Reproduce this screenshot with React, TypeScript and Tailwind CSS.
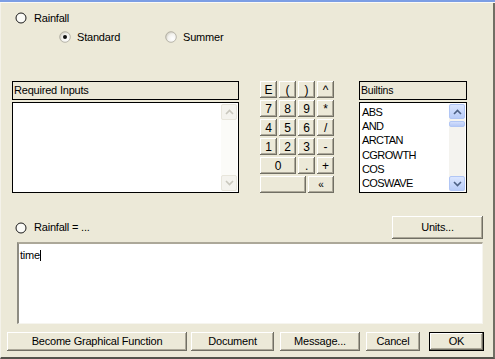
import React from "react";

const bevel =
  "bg-[#ece9d8] shadow-[inset_-1px_-1px_0_#716f64,inset_1px_1px_0_#ffffff,inset_-2px_-2px_0_#aca899] flex items-center justify-center text-black";

function Radio({ checked, plain }: { checked?: boolean; plain?: boolean }) {
  if (plain) {
    return (
      <svg width="12" height="12" viewBox="0 0 12 12" className="shrink-0">
        <circle cx="6" cy="6" r="5" fill="#fbfbf7" stroke="#1a1a1a" strokeWidth="1" />
      </svg>
    );
  }
  return (
    <svg width="12" height="12" viewBox="0 0 12 12" className="shrink-0">
      <defs>
        <radialGradient id="rg" cx="0.65" cy="0.65" r="0.7">
          <stop offset="0" stopColor="#ffffff" />
          <stop offset="0.6" stopColor="#f3f2ee" />
          <stop offset="1" stopColor="#cfccc0" />
        </radialGradient>
      </defs>
      <circle cx="6" cy="6" r="5.3" fill="url(#rg)" stroke="#a8a69a" strokeWidth="0.8" />
      {checked && <circle cx="6" cy="6" r="2" fill="#111" />}
    </svg>
  );
}

function Chevron({ up, color }: { up?: boolean; color: string }) {
  return (
    <svg width="9" height="6" viewBox="0 0 9 6">
      <path
        d={up ? "M1 5 L4.5 1.5 L8 5" : "M1 1 L4.5 4.5 L8 1"}
        fill="none"
        stroke={color}
        strokeWidth="1.6"
      />
    </svg>
  );
}

export default function App() {
  const calcRows = [
    ["E", "(", ")", "^"],
    ["7", "8", "9", "*"],
    ["4", "5", "6", "/"],
    ["1", "2", "3", "-"],
  ];
  const builtins = ["ABS", "AND", "ARCTAN", "CGROWTH", "COS", "COSWAVE"];
  return (
    <div className="w-[495px] h-[359px] bg-[#ece9d8] flex flex-col overflow-hidden font-['Liberation_Sans',Arial,sans-serif] text-[11px] leading-none text-black tracking-[-0.2px]">
      <div className="h-[2px] bg-[#7c9ee4] shrink-0" />
      <div className="h-px bg-[#fbfaf6] shrink-0" />
      <div className="flex-1 flex flex-col border-r-2 border-b-2 border-r-[#716f64] border-b-[#55534c] border-l border-l-[#f4f2ea]">
        {/* Row 1 */}
        <div className="mt-[9px] h-[12px] flex items-center pl-[14px]">
          <Radio plain />
          <span className="ml-[7px]">Rainfall</span>
        </div>
        {/* Row 2 */}
        <div className="mt-[7px] h-[12px] flex items-center">
          <div className="ml-[58px] flex items-center">
            <Radio checked />
            <span className="ml-[6px]">Standard</span>
          </div>
          <div className="ml-[45px] flex items-center">
            <Radio />
            <span className="ml-[6px]">Summer</span>
          </div>
        </div>
        {/* Middle section */}
        <div className="mt-[38px] flex items-start">
          <div className="ml-[11px] w-[227px] flex flex-col">
            <div className="h-[19px] border border-black flex items-center pl-[1px]">Required Inputs</div>
            <div className="mt-[2px] h-[91px] border border-black bg-white flex justify-end p-[1px]">
              <div className="w-[16px] h-full bg-[#fbfbf8] flex flex-col justify-between">
                <div className="h-[16px] bg-[#f4f3ee] border border-[#e8e6dc] rounded-[2px] flex items-center justify-center">
                  <Chevron up color="#c9c7bd" />
                </div>
                <div className="h-[16px] bg-[#f4f3ee] border border-[#e8e6dc] rounded-[2px] flex items-center justify-center">
                  <Chevron color="#c9c7bd" />
                </div>
              </div>
            </div>
          </div>
          <div className="ml-[21px] w-[74px] flex flex-col gap-[2px]">
            {calcRows.map((row, i) => (
              <div key={i} className="flex gap-[2px]">
                {row.map((k) => (
                  <div key={k} className={`w-[17px] h-[17px] text-[12px] ${bevel}`}>
                    {k}
                  </div>
                ))}
              </div>
            ))}
            <div className="flex gap-[2px]">
              <div className={`w-[36px] h-[17px] text-[12px] ${bevel}`}>0</div>
              <div className={`w-[17px] h-[17px] text-[12px] ${bevel}`}>.</div>
              <div className={`w-[17px] h-[17px] text-[12px] ${bevel}`}>+</div>
            </div>
            <div className="flex gap-[2px]">
              <div className={`w-[46px] h-[17px] ${bevel}`} />
              <div className={`w-[26px] h-[17px] text-[10px] ${bevel}`}>«</div>
            </div>
          </div>
          <div className="ml-[25px] w-[108px] flex flex-col">
            <div className="h-[19px] border border-black flex items-center pl-[1px] text-[10.5px]">Builtins</div>
            <div className="mt-[2px] h-[91px] border border-black bg-white flex p-[1px]">
              <div className="flex-1 flex flex-col pl-[1px] pt-px text-[11px] tracking-[-0.6px]">
                {builtins.map((b) => (
                  <div key={b} className="h-[15px] flex items-center">
                    {b}
                  </div>
                ))}
              </div>
              <div className="w-[16px] h-full bg-[#f4f3ef] flex flex-col justify-between">
                <div className="flex flex-col">
                  <div className="h-[15px] bg-gradient-to-b from-[#dbe6ff] to-[#b8ccf8] border border-[#b1c6f5] rounded-[2px] flex items-center justify-center">
                    <Chevron up color="#4d6185" />
                  </div>
                  <div className="mt-[2px] h-[6px] bg-gradient-to-b from-[#d2defc] to-[#b6c9f6] border border-[#b1c6f5] rounded-[2px]" />
                </div>
                <div className="h-[15px] bg-gradient-to-b from-[#dbe6ff] to-[#b8ccf8] border border-[#b1c6f5] rounded-[2px] flex items-center justify-center">
                  <Chevron color="#4d6185" />
                </div>
              </div>
            </div>
          </div>
        </div>
        {/* Rainfall = ... row */}
        <div className="mt-[23px] h-[23px] flex items-center">
          <div className="ml-[14px] flex items-center">
            <Radio plain />
            <span className="ml-[7px]">Rainfall = ...</span>
          </div>
          <div className={`ml-auto mr-[10px] w-[91px] h-[23px] ${bevel}`}>Units...</div>
        </div>
        {/* Text area */}
        <div className="mt-[3px] ml-[16px] w-[466px] h-[82px] bg-white border-t-2 border-l-2 border-t-[#aca899] border-l-[#8e8c82] border-b border-r border-b-[#f6f5ef] border-r-[#f6f5ef] pl-[1px] pt-[6px]">
          <span>time</span>
          <span className="inline-block w-px h-[11px] bg-black align-[-2px]" />
        </div>
        {/* Buttons */}
        <div className="mt-[8px] h-[19px] flex">
          <div className={`ml-[6px] w-[180px] h-[19px] ${bevel}`}>Become Graphical Function</div>
          <div className={`ml-[4px] w-[83px] h-[19px] ${bevel}`}>Document</div>
          <div className={`ml-[6px] w-[80px] h-[19px] ${bevel}`}>Message...</div>
          <div className={`ml-[6px] w-[54px] h-[19px] ${bevel}`}>Cancel</div>
          <div className="ml-[9px] w-[55px] h-[19px] border border-black">
            <div className={`w-full h-full ${bevel}`}>OK</div>
          </div>
        </div>
      </div>
    </div>
  );
}
